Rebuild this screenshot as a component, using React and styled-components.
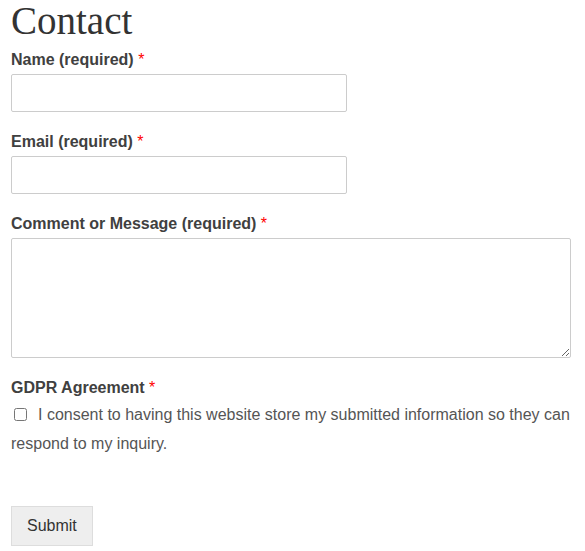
import React from 'react';
import styled, { createGlobalStyle } from 'styled-components';

const GlobalStyle = createGlobalStyle`
  body {
    margin: 0;
    background: #fff;
    font-family: "Liberation Sans", Arial, sans-serif;
  }
`;

const Page = styled.div`
  padding: 0 14px 0 11px;
`;

const Title = styled.h1`
  margin: 0 0 6px;
  font-family: "Liberation Serif", "Times New Roman", serif;
  font-weight: normal;
  font-size: 39px;
  line-height: 42px;
  color: #333;
`;

const Field = styled.div`
  margin-bottom: 18px;
`;

const Label = styled.label`
  display: block;
  margin-bottom: ${(p) => (p.$tight ? '0' : '2px')};
  font-size: 16px;
  font-weight: bold;
  line-height: 24px;
  color: #404040;
`;

const Required = styled.span`
  color: #f00;
  font-weight: normal;
`;

const TextInput = styled.input`
  display: block;
  box-sizing: border-box;
  width: 336px;
  height: 38px;
  margin: 0;
  border: 1px solid #ccc;
  border-radius: 2px;
  background: #fff;
`;

const TextArea = styled.textarea`
  display: block;
  box-sizing: border-box;
  width: 560px;
  height: 120px;
  margin: 0;
  border: 1px solid #ccc;
  border-radius: 2px;
  background: #fff;
`;

const Consent = styled.label`
  display: block;
  font-size: 16px;
  line-height: 29px;
  color: #555;
`;

const Check = styled.input`
  width: 13px;
  height: 13px;
  margin: 0 11px 0 3px;
  vertical-align: -1px;
`;

const Submit = styled.button`
  margin-top: 48px;
  padding: 0 15px;
  height: 40px;
  border: 1px solid #ddd;
  background: #eee;
  font-family: "Liberation Sans", Arial, sans-serif;
  font-size: 16px;
  color: #333;
`;

export default function App() {
  return (
    <Page>
      <GlobalStyle />
      <Title>Contact</Title>
      <Field>
        <Label>
          Name (required) <Required>*</Required>
        </Label>
        <TextInput type="text" />
      </Field>
      <Field>
        <Label>
          Email (required) <Required>*</Required>
        </Label>
        <TextInput type="email" />
      </Field>
      <Field>
        <Label>
          Comment or Message (required) <Required>*</Required>
        </Label>
        <TextArea />
      </Field>
      <div>
        <Label $tight>
          GDPR Agreement <Required>*</Required>
        </Label>
        <Consent>
          <Check type="checkbox" />
          I consent to having this website store my submitted information so they can respond to my inquiry.
        </Consent>
      </div>
      <Submit type="submit">Submit</Submit>
    </Page>
  );
}
